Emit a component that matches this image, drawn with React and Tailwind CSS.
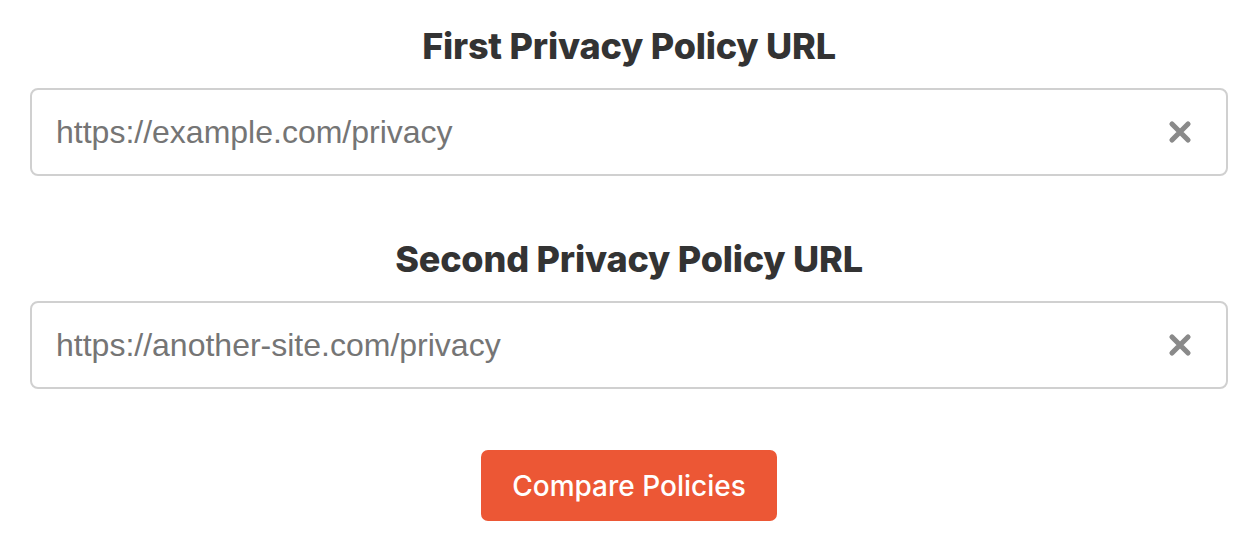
import React, { useState } from 'react';

const ClearIcon = () => (
  <svg width="24" height="24" viewBox="0 0 24 24" className="text-[#8a8a8a]">
    <path d="M4 4 L20 20 M20 4 L4 20" stroke="currentColor" strokeWidth="5.2" strokeLinecap="round" />
  </svg>
);

const UrlField = ({ label, placeholder }) => {
  const [value, setValue] = useState('');
  return (
    <div className="flex flex-col">
      <h2 className="text-center text-[36px] leading-[42px] font-extrabold text-[#333333] tracking-[-0.2px] mb-[21px]">
        {label}
      </h2>
      <div className="flex items-center h-[88px] border-2 border-[#d0d0d0] rounded-[8px] bg-white pl-[24px] pr-[34px]">
        <input
          type="text"
          value={value}
          onChange={(e) => setValue(e.target.value)}
          placeholder={placeholder}
          className="flex-1 bg-transparent outline-none text-[32px] text-[#333] placeholder:text-[#757575] font-['Liberation_Sans',Arial,sans-serif]"
        />
        <button type="button" onClick={() => setValue('')} className="flex items-center justify-center">
          <ClearIcon />
        </button>
      </div>
    </div>
  );
};

export default function App() {
  return (
    <div className="w-[1246px] h-[538px] bg-white font-['Inter',sans-serif]">
      <div className="ml-[30px] w-[1198px] pt-[25px] flex flex-col">
        <UrlField label="First Privacy Policy URL" placeholder="https://example.com/privacy" />
        <div className="h-[62px]" />
        <UrlField label="Second Privacy Policy URL" placeholder="https://another-site.com/privacy" />
        <div className="flex justify-center mt-[61px]">
          <button
            type="button"
            className="w-[296px] h-[71px] rounded-[7px] bg-[#ec5735] text-white text-[28px] font-medium hover:bg-[#d94b2b]"
          >
            Compare Policies
          </button>
        </div>
      </div>
    </div>
  );
}
